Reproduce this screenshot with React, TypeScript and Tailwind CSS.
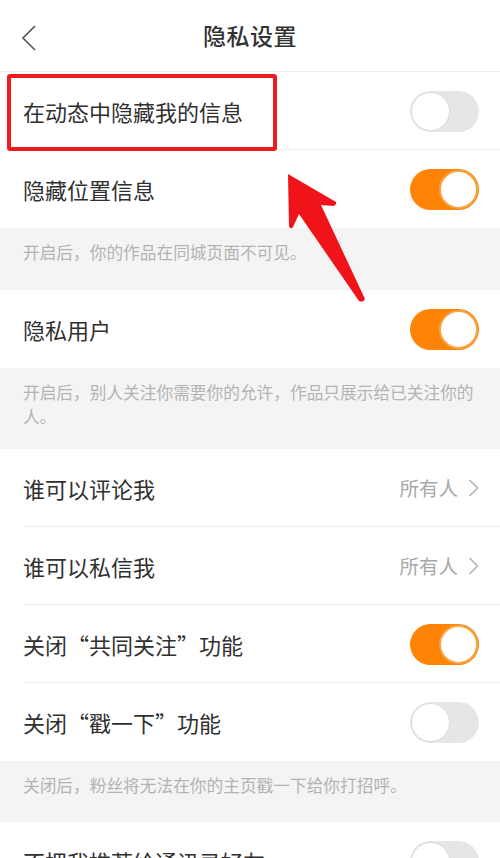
import React from 'react';

type Row =
  | { kind: 'toggle'; label: string; on: boolean; divider?: boolean }
  | { kind: 'link'; label: string; value: string; divider?: boolean }
  | { kind: 'note'; text: string; h: string };

const rows: Row[] = [
  { kind: 'toggle', label: '在动态中隐藏我的信息', on: false, divider: true },
  { kind: 'toggle', label: '隐藏位置信息', on: true },
  { kind: 'note', text: '开启后，你的作品在同城页面不可见。', h: 'h-[62px]' },
  { kind: 'toggle', label: '隐私用户', on: true },
  { kind: 'note', text: '开启后，别人关注你需要你的允许，作品只展示给已关注你的人。', h: 'h-[81px]' },
  { kind: 'link', label: '谁可以评论我', value: '所有人', divider: true },
  { kind: 'link', label: '谁可以私信我', value: '所有人', divider: true },
  { kind: 'toggle', label: '关闭“共同关注”功能', on: true, divider: true },
  { kind: 'toggle', label: '关闭“戳一下”功能', on: false },
  { kind: 'note', text: '关闭后，粉丝将无法在你的主页戳一下给你打招呼。', h: 'h-[61px]' },
  { kind: 'toggle', label: '不把我推荐给通讯录好友', on: false },
];

function Toggle({ on }: { on: boolean }) {
  return (
    <div
      className={`relative h-[41px] w-[69px] rounded-full ${
        on ? 'bg-[#ff8405]' : 'bg-[#e6e6e6]'
      }`}
    >
      <div
        className={`absolute top-[1px] h-[39px] w-[39px] rounded-full bg-white ${
          on ? 'right-[1px] border-2 border-[#f7a64a]' : 'left-[1px] border border-[#dcdcdc]'
        }`}
      />
    </div>
  );
}

export default function App() {
  return (
    <div
      className="relative h-[858px] w-[500px] overflow-hidden bg-white text-[#333]"
      style={{ fontFamily: '"Noto Sans CJK SC", "Noto Sans", sans-serif' }}
    >
      {/* Header */}
      <div className="relative flex h-[72px] items-center justify-center border-b border-[#ececec]">
        <svg className="absolute left-[20px] top-[24px]" width="18" height="28" viewBox="0 0 18 28">
          <path d="M15 2 L3 14 L15 26" fill="none" stroke="#555" strokeWidth="1.6" />
        </svg>
        <span className="text-[23px] font-medium tracking-[0.5px] text-[#333]">隐私设置</span>
      </div>

      {rows.map((row, i) => {
        if (row.kind === 'note') {
          return (
            <div key={i} className={`${row.h} bg-[#f4f4f4] px-[23px] pt-[12px] text-[16.7px] leading-[24px] text-[#b3b3b3]`}>
              {row.text}
            </div>
          );
        }
        return (
          <div key={i} className="relative flex h-[78px] items-center justify-between pl-[23px] pr-[21px]">
            <span className="text-[22px] text-[#303030]">{row.label}</span>
            {row.kind === 'toggle' ? (
              <Toggle on={row.on} />
            ) : (
              <div className="flex items-center gap-[10px] text-[19.5px] text-[#a8a8a8]">
                <span>{row.value}</span>
                <svg width="11" height="20" viewBox="0 0 11 20">
                  <path d="M1.5 2 L9.5 10 L1.5 18" fill="none" stroke="#b5b5b5" strokeWidth="1.6" />
                </svg>
              </div>
            )}
            {row.divider && <div className="absolute bottom-0 left-[23px] right-0 h-px bg-[#ececec]" />}
          </div>
        );
      })}

      {/* Highlight box */}
      <div className="absolute left-[7px] top-[74px] h-[77px] w-[270px] rounded-[3px] border-[4px] border-[#ee1c1f]" />

      {/* Arrow */}
      <svg className="absolute left-0 top-0" width="500" height="858" viewBox="0 0 500 858">
        <path
          d="M288 174 L336 202 Q337 205 333 206 L321 205 L365 299 Q363 303 359 301 L299 214 L293 227 Q290 230 289 226 Z"
          fill="#f0141a"
          strokeLinejoin="round"
        />
      </svg>
    </div>
  );
}
